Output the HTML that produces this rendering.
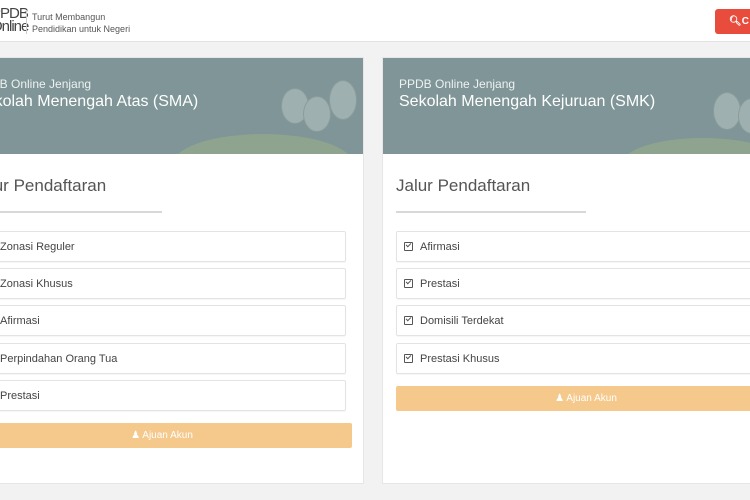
<!DOCTYPE html>
<html><head><meta charset="utf-8"><style>
*{box-sizing:border-box;margin:0;padding:0}
body{width:750px;height:500px;overflow:hidden;background:#f2f2f2;font-family:"Liberation Sans",sans-serif;position:relative}
.hdr{position:absolute;left:0;top:0;width:750px;height:42px;background:#fff;border-bottom:1px solid #e2e2e2}
.logo{position:absolute;left:-9px;top:7px;font-size:15px;line-height:13px;color:#444;letter-spacing:-1px}
.sep{position:absolute;left:26px;top:10px;width:1px;height:24px;background:#ccc}
.tag{position:absolute;left:32px;top:11px;font-size:9px;line-height:12px;color:#555}
.btn{position:absolute;left:715px;top:9px;width:45px;height:25px;background:#e74c3c;border-radius:3px;color:#fff;font-size:10px;font-weight:bold;padding:7px 0 0 14px}
.card{position:absolute;top:57px;width:406px;height:427px;background:#fff;border:1px solid #e6e6e6}
.ban{position:absolute;left:0;top:0;width:100%;height:96px;background:#7f9597;overflow:hidden}
.ban .s{position:absolute;left:16px;top:19px;font-size:12px;color:#eef2f2}
.ban .t{position:absolute;left:16px;top:35px;font-size:16px;color:#fff}
.h{position:absolute;left:13px;top:118px;font-size:17px;color:#555}
.ul{position:absolute;left:13px;top:153px;width:190px;height:2px;background:#d8d8d8}
.it{position:absolute;left:13px;width:374px;height:31px;border:1px solid #e3e3e3;border-radius:2px;font-size:11px;color:#444;padding:9px 0 0 27px;box-shadow:0 1px 1px rgba(0,0,0,.04)}
.ab{position:absolute;left:13px;width:380px;height:25px;background:#f5c88c;border-radius:2px;color:#fff;font-size:10px;text-align:center;padding-top:7px}
.r .it{padding-left:7px}
.ck{display:inline-block;width:9px;height:9px;border:1.5px solid #555;border-radius:1px;margin-right:7px;position:relative;top:1px}
.ck:after{content:"";position:absolute;left:1px;top:0px;width:4px;height:2px;border-left:1.5px solid #555;border-bottom:1.5px solid #555;transform:rotate(-45deg)}
.hill{position:absolute;border-radius:50%;background:#8fa48e}
.kid{position:absolute;border-radius:50%;background:#9fb0b0;border:1px solid #8a9c9c}
</style></head><body>
<div class="hdr">
<div class="logo">PPDB<br>Online</div><div class="sep"></div>
<div class="tag">Turut Membangun<br>Pendidikan untuk Negeri</div>
<div class="btn">&#x1F50D;&#xFE0E;C</div>
</div>

<div class="card" style="left:-42px">
<div class="ban">
<div class="hill" style="left:214px;top:76px;width:180px;height:60px"></div>
<div class="kid" style="left:322px;top:30px;width:28px;height:36px"></div>
<div class="kid" style="left:344px;top:38px;width:28px;height:36px"></div>
<div class="kid" style="left:370px;top:22px;width:28px;height:40px"></div>
<div class="s">PPDB Online Jenjang</div><div class="t">Sekolah Menengah Atas (SMA)</div></div>
<div class="h">Jalur Pendaftaran</div><div class="ul"></div>
<div class="it" style="top:173px">Zonasi Reguler</div>
<div class="it" style="top:210px">Zonasi Khusus</div>
<div class="it" style="top:247px">Afirmasi</div>
<div class="it" style="top:285px">Perpindahan Orang Tua</div>
<div class="it" style="top:322px">Prestasi</div>
<div class="ab" style="top:365px">&#9823; Ajuan Akun</div>
</div>

<div class="card r" style="left:382px">
<div class="ban">
<div class="hill" style="left:240px;top:80px;width:160px;height:50px"></div>
<div class="kid" style="left:330px;top:34px;width:28px;height:38px"></div>
<div class="kid" style="left:355px;top:40px;width:28px;height:36px"></div>
<div class="s">PPDB Online Jenjang</div><div class="t">Sekolah Menengah Kejuruan (SMK)</div></div>
<div class="h">Jalur Pendaftaran</div><div class="ul"></div>
<div class="it" style="top:173px"><span class="ck"></span>Afirmasi</div>
<div class="it" style="top:210px"><span class="ck"></span>Prestasi</div>
<div class="it" style="top:247px"><span class="ck"></span>Domisili Terdekat</div>
<div class="it" style="top:285px"><span class="ck"></span>Prestasi Khusus</div>
<div class="ab" style="top:328px">&#9823; Ajuan Akun</div>
</div>
</body></html>
